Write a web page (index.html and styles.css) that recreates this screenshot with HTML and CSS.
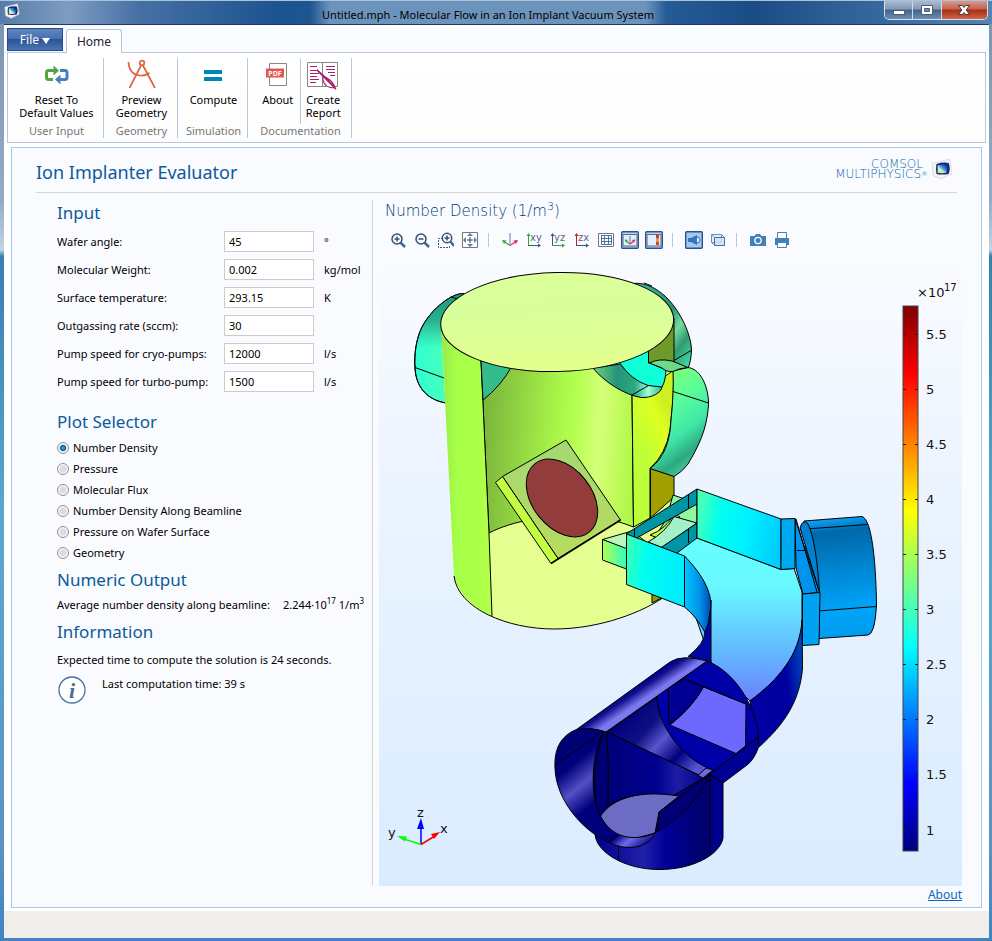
FILE: index.html
```html
<!DOCTYPE html>
<html lang="en">
<head>
<meta charset="utf-8">
<title>Untitled.mph - Molecular Flow in an Ion Implant Vacuum System</title>
<link rel="stylesheet" href="styles.css">
</head>
<body>
<svg width="0" height="0" class="sprite" aria-hidden="true">
  <defs>
    <linearGradient id="scr" x1="0" y1="1" x2="1" y2="0"><stop offset="0" stop-color="#ffe94a"/><stop offset=".35" stop-color="#c8f0c0"/><stop offset=".6" stop-color="#2f8be0"/><stop offset="1" stop-color="#06158c"/></linearGradient>
    <symbol id="app" viewBox="0 0 20 20"><path d="M1 5 17 1l2 13-10 5-7-3z" fill="#f3f3f3" stroke="#cfcfcf" stroke-width=".6"/><path d="M5 5.500q6-2 11-1 2 5 0 10-6 1-11 0Q4 10 5 5.500z" fill="#12267c"/><path d="M6 6.500q5-1 8-.5 1.500 3.500 0 7.500-4 .5-8 0z" fill="url(#scr)"/></symbol>
  </defs>
</svg>
<div class="window">
  <header class="titlebar">
    <svg class="app-icon" aria-hidden="true"><use href="#app"/></svg>
    <h1 class="caption"><span>Untitled.mph - Molecular Flow in an Ion Implant Vacuum System</span></h1>
    <div class="winbuttons">
      <button type="button" class="win-min" aria-label="Minimize"><svg viewBox="0 0 14 12"><rect x="1.500" y="6.500" width="11" height="4" fill="#fff" stroke="#4c5c74"/></svg></button>
      <button type="button" class="win-max" aria-label="Maximize"><svg viewBox="0 0 14 12"><path d="M1.500 1.500h11v9h-11z" fill="#fff" stroke="#4c5c74"/><path d="M4.500 4.500h5v3h-5z" fill="#6b8cb4" stroke="#4c5c74"/></svg></button>
      <button type="button" class="win-close" aria-label="Close"><svg viewBox="0 0 14 12"><path d="M1.500 1.500h4L7 3.500l1.500-2h4L9.200 6l3.300 4.500h-4L7 8.500l-1.500 2h-4L4.800 6z" fill="#fff" stroke="#4f3038"/></svg></button>
    </div>
  </header>

  <div class="client">
    <nav class="tabs">
      <button type="button" class="file">File <svg viewBox="0 0 8 7"><path d="M0 1h8L4 7z" fill="#fff"/></svg></button>
      <button type="button" class="tab">Home</button>
    </nav>
    <section class="ribbon">
      <div class="group g-reset">
        <div class="tools">
          <button type="button"><svg viewBox="0 0 32 32"><g fill="none" stroke-width="3"><path d="M13 21.500H8.500q-2 0-2-2v-5q0-2 2-2H14" stroke="#52a63a"/><path d="M20 12.500h5q2 0 2 2v5q0 2-2 2h-5" stroke="#4480bb"/></g><path d="M13.500 7.500 19 12.500l-5.500 5z" fill="#52a63a"/><path d="M20.500 16.500V26.500L15 21.500z" fill="#4480bb"/></svg><span>Reset To<br>Default Values</span></button>
        </div>
        <div class="gname">User Input</div>
      </div>
      <div class="group g-geom">
        <div class="tools">
          <button type="button"><svg viewBox="0 0 32 32"><g fill="none" stroke="#dd6544" stroke-width="1.700"><circle cx="17" cy="5" r="2.300"/><path d="M16 7.500 4.500 30M18 7.500 30 30M3.500 4c0 7 4 13 11.500 13.500 4 .5 7-.5 9.500-2.500"/></g></svg><span>Preview<br>Geometry</span></button>
        </div>
        <div class="gname">Geometry</div>
      </div>
      <div class="group g-sim">
        <div class="tools">
          <button type="button"><svg viewBox="0 0 32 32"><path d="M7 12h18v4H7zM7 19h18v4H7z" fill="#0086b3"/></svg><span>Compute</span></button>
        </div>
        <div class="gname">Simulation</div>
      </div>
      <div class="group g-doc">
        <div class="tools">
          <button type="button" class="b-about"><svg viewBox="0 0 32 32"><path d="M7.500 5.500h17v22h-17z" fill="#fff" stroke="#888"/><path d="M4 10.500h18v9H4z" fill="#e4574c"/><text x="13" y="17.500" text-anchor="middle" class="pdf">PDF</text></svg><span>About</span></button>
          <button type="button" class="b-report"><svg viewBox="0 0 32 32"><path d="M.5 4.500h30v24H.5zM15.500 4.500v24" fill="#fff" stroke="#888"/><path d="M3 8.500h7M3 12.500h8M3 15.500h9M3 18.500h7M3 21.500h9M3 24.500h6M19 8.500h9M19 11.500h9M21 14.500h7M23 17.500h5" stroke="#a8216e"/><path d="M10 12c5 4 12 10 18 18-7 0-11-2-12-8-1-3 1-4 4-2 5 3 7 6 8 10z" fill="#fff" stroke="#a8216e" stroke-width="1.200"/><path d="M10 12 29 31" stroke="#a8216e" stroke-width="1.200"/></svg><span>Create<br>Report</span></button>
        </div>
        <div class="gname">Documentation</div>
      </div>
    </section>

    <main class="panel">
      <div class="head">
        <h2>Ion Implanter Evaluator</h2>
        <div class="logo"><div class="logo-text"><div class="logo-top">COMSOL</div><div>MULTIPHYSICS<sup>®</sup></div></div><svg aria-hidden="true"><use href="#app"/></svg></div>
      </div>
      <div class="body">
        <form class="side">
          <h3>Input</h3>
          <div class="fields">
            <label for="f1">Wafer angle:</label><input id="f1" type="text" value="45"><span>°</span>
            <label for="f2">Molecular Weight:</label><input id="f2" type="text" value="0.002"><span>kg/mol</span>
            <label for="f3">Surface temperature:</label><input id="f3" type="text" value="293.15"><span>K</span>
            <label for="f4">Outgassing rate (sccm):</label><input id="f4" type="text" value="30"><span></span>
            <label for="f5">Pump speed for cryo-pumps:</label><input id="f5" type="text" value="12000"><span>l/s</span>
            <label for="f6">Pump speed for turbo-pump:</label><input id="f6" type="text" value="1500"><span>l/s</span>
          </div>
          <h3>Plot Selector</h3>
          <div class="radios">
            <label><input type="radio" name="plot" checked>Number Density</label>
            <label><input type="radio" name="plot">Pressure</label>
            <label><input type="radio" name="plot">Molecular Flux</label>
            <label><input type="radio" name="plot">Number Density Along Beamline</label>
            <label><input type="radio" name="plot">Pressure on Wafer Surface</label>
            <label><input type="radio" name="plot">Geometry</label>
          </div>
          <h3>Numeric Output</h3>
          <div class="result"><span>Average number density along beamline:</span><output>2.244·10<sup>17</sup> 1/m<sup>3</sup></output></div>
          <h3>Information</h3>
          <p class="expected">Expected time to compute the solution is 24 seconds.</p>
          <div class="last">
            <svg viewBox="0 0 28 28" aria-hidden="true"><circle cx="14" cy="14" r="13" fill="#fff" stroke="#44709f" stroke-width="1.300"/><text x="14" y="22" text-anchor="middle" class="i">i</text></svg>
            <span>Last computation time: 39 s</span>
          </div>
        </form>

        <section class="graph">
          <h3 class="plot-title">Number Density (1/m<sup>3</sup>)</h3>
          <div class="toolbar">
            <button type="button" aria-label="Zoom in"><svg viewBox="0 0 16 16"><circle cx="7" cy="7" r="5" class="z"/><path d="M10.500 10.500 15 15" class="zh"/><path d="M4.500 7h5M7 4.500v5" class="z"/></svg></button>
            <button type="button" aria-label="Zoom out"><svg viewBox="0 0 16 16"><circle cx="7" cy="7" r="5" class="z"/><path d="M10.500 10.500 15 15" class="zh"/><path d="M4.500 7h5" class="z"/></svg></button>
            <button type="button" aria-label="Zoom box"><svg viewBox="0 0 16 16"><path d="M5 6.500H.5v9h11V13" fill="none" stroke="#3f5878" stroke-dasharray="2 1"/><circle cx="9" cy="6" r="4.700" class="z"/><path d="M12.500 9.500 16 14" class="zh"/><path d="M6.500 6h5M9 3.500v5" class="z"/></svg></button>
            <button type="button" aria-label="Zoom extents"><svg viewBox="0 0 16 16"><path d="M.5.5h15v15H.5z" fill="#fff" stroke="#777"/><path d="M5 8h6M8 5v6" stroke="#345"/><path d="M8 1l3 3H5zM8 15l3-3H5zM1 8l3-3v6zM15 8l-3-3v6z" fill="#4a80b8"/></svg></button>
            <i></i>
            <button type="button" aria-label="Default view"><svg viewBox="0 0 16 16"><path d="M8 1v11" stroke="#4a80b8"/><path d="M8 13.500 1 9" stroke="#3cab2c" stroke-width="1.300"/><path d="m0 8 4.500.5-2.500 3.500z" fill="#3cab2c"/><path d="m8 13.500 7-4.500" stroke="#e0286c" stroke-width="1.300"/><path d="m16 8-4.500.5 2.500 3.500z" fill="#e0286c"/></svg></button>
            <button type="button" aria-label="XY view"><svg viewBox="0 0 16 16"><path d="M2.500 2v12" stroke="#35a535"/><path d="M.5 4 2.500 1l2 3z" fill="#35a535"/><path d="M2 13.500h12" stroke="#36587c"/><path d="m12 11.500 3 2-3 2z" fill="#36587c"/><text x="4" y="9" class="ax">xy</text></svg></button>
            <button type="button" aria-label="YZ view"><svg viewBox="0 0 16 16"><path d="M2.500 2v12" stroke="#36587c"/><path d="M.5 4 2.500 1l2 3z" fill="#36587c"/><path d="M2 13.500h12" stroke="#35a535"/><path d="m12 11.500 3 2-3 2z" fill="#35a535"/><text x="4" y="9" class="ax">yz</text></svg></button>
            <button type="button" aria-label="ZX view"><svg viewBox="0 0 16 16"><path d="M2.500 2v12" stroke="#c02020"/><path d="M.5 4 2.500 1l2 3z" fill="#c02020"/><path d="M2 13.500h12" stroke="#36587c"/><path d="m12 11.500 3 2-3 2z" fill="#36587c"/><text x="4" y="9" class="ax">zx</text></svg></button>
            <button type="button" aria-label="Grid"><svg viewBox="0 0 16 16"><path d="M.5 1.500h15v13H.5z" fill="#fff" stroke="#777"/><path d="M3 3.500h10.500v9H3.500v-9M3 6.500h10M3 9.500h10M6.500 3v9M10.500 3v9" fill="none" stroke="#4a70a0"/></svg></button>
            <button type="button" aria-label="Axis orientation"><svg viewBox="0 0 18 18" class="on"><rect x=".7" y=".7" width="16.600" height="16.600" rx="1" fill="#bcd6f4" stroke="#29508f" stroke-width="1.400"/><path d="M2 3.500h14v11.500H2z" fill="#e0eefe" stroke="#667"/><path d="M9 5v7" stroke="#4a80b8"/><path d="M9 13 5 10" stroke="#3cab2c" stroke-width="1.300"/><path d="m3.500 8.500 3.500.5-2 2.500z" fill="#3cab2c"/><path d="m9 13 4-3" stroke="#e0286c" stroke-width="1.300"/><path d="m14.500 8.500-3.500.5 2 2.500z" fill="#e0286c"/></svg></button>
            <button type="button" aria-label="Color legend"><svg viewBox="0 0 18 18" class="on"><rect x=".7" y=".7" width="16.600" height="16.600" rx="1" fill="#bcd6f4" stroke="#29508f" stroke-width="1.400"/><path d="M2 3.500h14v11.500H2z" fill="#e0eefe" stroke="#667"/><path d="M11 4h3v4h-3z" fill="#b83c58"/><path d="M11 7h3v4h-3z" fill="#e89440"/><path d="M11 11h3v3h-3z" fill="#d04428"/></svg></button>
            <i></i>
            <button type="button" aria-label="Scene light"><svg viewBox="0 0 18 18" class="on"><rect x=".7" y=".7" width="16.600" height="16.600" rx="1" fill="#a8c8f0" stroke="#29508f" stroke-width="1.400"/><path d="M3 7h3l6-3v10l-6-3H3z" fill="#3674b4"/><path d="M12 6q3 0 3 3t-3 3" fill="#dcebff" stroke="#3674b4"/></svg></button>
            <button type="button" aria-label="Transparency"><svg viewBox="0 0 16 16"><path d="M1.500 2.500h10v8h-10z" fill="#e3eefb" stroke="#6b94c4"/><path d="M4.500 5.500h10v8h-10z" fill="#cfe0f5" fill-opacity=".8" stroke="#3f6fa8"/><path d="m1.500 2.500 3 3M11.500 2.500l3 3M1.500 10.500l3 3" stroke="#6b94c4"/></svg></button>
            <i></i>
            <button type="button" aria-label="Image snapshot"><svg viewBox="0 0 16 16"><path d="M0 4h4.500L6 2h4l1.500 2H16v10H0z" fill="#4480b8"/><circle cx="8" cy="8.500" r="3.800" fill="#fff"/><circle cx="8" cy="8.500" r="2.500" fill="#4480b8"/></svg></button>
            <button type="button" aria-label="Print"><svg viewBox="0 0 16 16"><path d="M3.500.5h9v6h-9z" fill="#fff" stroke="#4480b8"/><path d="M1 6h14v7H1z" fill="#4480b8"/><path d="M3.500 10.500h9v5h-9z" fill="#fff" stroke="#4480b8"/></svg></button>
          </div>
          <svg class="scene" viewBox="379 260 583 626" role="img" aria-label="Number density in the vacuum system">
            <defs>
              <linearGradient id="bar" x1="0" x2="0" y1="0" y2="1"><stop offset="0" stop-color="#800000"/><stop offset=".125" stop-color="#f00"/><stop offset=".375" stop-color="#ff0"/><stop offset=".5" stop-color="#80ff80"/><stop offset=".625" stop-color="#0ff"/><stop offset=".875" stop-color="#00f"/><stop offset="1" stop-color="#000080"/></linearGradient>
              <linearGradient id="wall" gradientUnits="userSpaceOnUse" x1="483" x2="634" y1="450" y2="460"><stop offset="0" stop-color="#7cb63c"/><stop offset=".45" stop-color="#a6f248"/><stop offset=".6" stop-color="#b4ff50"/><stop offset=".76" stop-color="#d6ff78"/><stop offset="1" stop-color="#aef846"/></linearGradient>
              <linearGradient id="yel" gradientUnits="userSpaceOnUse" x1="632" x2="674" y1="440" y2="420"><stop offset="0" stop-color="#baff3a"/><stop offset=".7" stop-color="#deff20"/><stop offset="1" stop-color="#ccf020"/></linearGradient>
              <linearGradient id="top" x1="0" x2="0" y1="0" y2="1"><stop offset="0" stop-color="#dcff98"/><stop offset=".35" stop-color="#d8ff9c"/><stop offset="1" stop-color="#e4ff8c"/></linearGradient>
              <linearGradient id="strip" x1="0" x2="1"><stop offset="0" stop-color="#98e848"/><stop offset=".3" stop-color="#a6ff48"/><stop offset="1" stop-color="#b2ff48"/></linearGradient>
              <linearGradient id="pl" x1="0" x2="1" y1=".3" y2=".2"><stop offset="0" stop-color="#30ffd4"/><stop offset=".5" stop-color="#48ffb8"/><stop offset="1" stop-color="#58f890"/></linearGradient>
              <linearGradient id="pls" x1="0" x2="0" y1="0" y2="1"><stop offset="0" stop-color="#209880"/><stop offset=".25" stop-color="#209078" stop-opacity=".7"/><stop offset=".5" stop-color="#20b090" stop-opacity="0"/></linearGradient>
              <linearGradient id="pr" x1="0" x2="1" y1="0" y2="1"><stop offset="0" stop-color="#40b898"/><stop offset=".5" stop-color="#269878"/><stop offset=".65" stop-color="#78dca0"/><stop offset=".78" stop-color="#309c70"/><stop offset="1" stop-color="#40e8ac"/></linearGradient>
              <linearGradient id="pb" x1=".3" x2=".7" y1="0" y2="1"><stop offset="0" stop-color="#84ff6c"/><stop offset=".3" stop-color="#5cff98"/><stop offset=".6" stop-color="#40e8a8"/><stop offset=".8" stop-color="#2ca880"/><stop offset="1" stop-color="#60d8a8"/></linearGradient>
              <linearGradient id="band" x1="0" x2="1"><stop offset="0" stop-color="#74d080"/><stop offset=".35" stop-color="#249478"/><stop offset=".6" stop-color="#2ca880"/><stop offset=".8" stop-color="#9cffd8"/><stop offset="1" stop-color="#30b898"/></linearGradient>
              <linearGradient id="front" x1="0" x2="1" y1=".4" y2=".6"><stop offset="0" stop-color="#38ffb8"/><stop offset=".3" stop-color="#00fff0"/><stop offset="1" stop-color="#00ecff"/></linearGradient>
              <linearGradient id="back" x1="0" x2="1" y1=".4" y2=".6"><stop offset="0" stop-color="#48ffb8"/><stop offset=".25" stop-color="#00fff0"/><stop offset=".6" stop-color="#00f0ff"/><stop offset="1" stop-color="#00ccff"/></linearGradient>
              <linearGradient id="duct" x1="0" x2="0" y1="0" y2="1"><stop offset="0" stop-color="#64ffff"/><stop offset=".3" stop-color="#68f8ff"/><stop offset=".7" stop-color="#64b8ff"/><stop offset="1" stop-color="#6c80ff"/></linearGradient>
              <linearGradient id="bend" x1="0" x2="1"><stop offset="0" stop-color="#00c4ff"/><stop offset=".6" stop-color="#0090e8"/><stop offset="1" stop-color="#0048b0"/></linearGradient>
              <linearGradient id="cyl" x1="0" x2=".07" y1="0" y2="1"><stop offset="0" stop-color="#28b0ff"/><stop offset=".1" stop-color="#0088d8"/><stop offset=".15" stop-color="#0068a8"/><stop offset=".45" stop-color="#0084d0"/><stop offset=".8" stop-color="#00a4f8"/><stop offset="1" stop-color="#009cf0"/></linearGradient>
              <linearGradient id="outer" x1="0" x2="1" y1=".7" y2=".4"><stop offset="0" stop-color="#0000a4"/><stop offset=".7" stop-color="#0000a0"/><stop offset="1" stop-color="#0040b4"/></linearGradient>
              <linearGradient id="ridge" gradientUnits="userSpaceOnUse" x1="622" y1="696" x2="643" y2="727"><stop offset="0" stop-color="#000090"/><stop offset=".12" stop-color="#10108c"/><stop offset=".4" stop-color="#7c78f0"/><stop offset=".5" stop-color="#7c78f0"/><stop offset=".8" stop-color="#4440b8"/><stop offset="1" stop-color="#3c38b0"/></linearGradient>
              <linearGradient id="ring" gradientUnits="userSpaceOnUse" x1="560" y1="740" x2="645" y2="845"><stop offset="0" stop-color="#000070"/><stop offset=".2" stop-color="#00007c"/><stop offset=".36" stop-color="#5450c4"/><stop offset=".52" stop-color="#00007c"/><stop offset=".82" stop-color="#00007c"/><stop offset=".9" stop-color="#706ce8"/><stop offset="1" stop-color="#101090"/></linearGradient>
              <linearGradient id="inner" gradientUnits="userSpaceOnUse" x1="625" y1="715" x2="690" y2="775"><stop offset="0" stop-color="#00007c"/><stop offset=".3" stop-color="#101084"/><stop offset=".5" stop-color="#5854cc"/><stop offset=".75" stop-color="#000080"/><stop offset="1" stop-color="#5854d0"/></linearGradient>
              <linearGradient id="iw" x1="0" x2="1"><stop offset="0" stop-color="#000078"/><stop offset=".5" stop-color="#000090"/><stop offset=".72" stop-color="#1c1ca4"/><stop offset="1" stop-color="#000088"/></linearGradient>
              <linearGradient id="base" x1="0" x2="1"><stop offset="0" stop-color="#000090"/><stop offset=".38" stop-color="#2020a8"/><stop offset=".55" stop-color="#000098"/><stop offset=".85" stop-color="#00006c"/><stop offset="1" stop-color="#00009c"/></linearGradient>
              <linearGradient id="blk" x1="0" x2="1"><stop offset="0" stop-color="#b0ff50"/><stop offset="1" stop-color="#30ffc0"/></linearGradient>
              <linearGradient id="waf" x1="0" x2="0" y1="0" y2="1"><stop offset="0" stop-color="#a4d874"/><stop offset="1" stop-color="#b8dc5c"/></linearGradient>
            </defs>
            <g stroke="#000" stroke-width="1" stroke-linejoin="round" fill="none">
              <!-- pump ports behind the chamber -->
              <path d="M464 293.500C452 293 432 308 422 327C416 339 414 355 415 368C416 388 428 400 446 403L470 403V300z" fill="url(#pl)"/>
              <path d="M464 293.500C452 293 432 308 422 327C416 339 414 355 415 368C416 388 428 400 446 403L470 403V300z" fill="url(#pls)"/>
              <path d="M415 367.500 444 378M450 297l9 2"/>
              <path d="M630 284C644 281 657 288 668 299C681 313 691 334 691.500 350Q691 362 688 368L660 362z" fill="url(#pr)"/>
              <path d="M673 361l19-11M644 283l8 3"/>
              <!-- chamber -->
              <path d="M454 576C458 609 508 629 554 629C600 629 644 612 667 595L674 480V322H441z" fill="#e4ff90" stroke="none"/>
              <path d="M481 361V300H650V395H632L633.500 527C618 521 606 518 590 517C548 514 512 521 489 533L486 470z" fill="url(#wall)"/>
              <path d="M632 390H645L674 370Q674 400 670 430Q666 454 650 468.500V518L633.500 527z" fill="url(#yel)"/>
              <path d="M650.500 468.500 674 476V497L650.500 518z" fill="#a2a000"/>
              <path d="M441 323 444 378 454 576C458 592 472 607 492 616L489 533 481 361 460 340z" fill="url(#strip)" stroke="none"/>
              <path d="M481 361 489 533 492 616"/>
              <path d="M454 576C458 609 508 629 554 629C600 629 644 612 667 595"/>
              <path d="M481 361 512 366Q501 386 483 400z" fill="#34bc8c"/>
              <path d="M593 368C604 382 625 395 641 397.500C652 398 661 393 662 387L648 360z" fill="url(#band)"/>
              <path d="M619 362Q631 380 648 385.500L662 387C665 382 665.500 376 666 370L650 363 648.500 345z" fill="#10ffd8"/>
              <path d="M632 395 648.500 385.500"/>
              <path d="M648.500 350.500 674 318V362L648.500 363z" fill="#70992c"/>
              <path d="M652 589V603L667 595z" fill="#86a010"/>
              <ellipse cx="557.200" cy="322" rx="116.500" ry="49.500" transform="rotate(-1.300 557 322)" fill="url(#top)"/>
              <path d="M673 371 688 367.500C702 369 709 390 708.500 405C707 430 698 447 688 464Q682 472 674 476.500L650 468.500C664 458 670 442 671 420Q674 392 673 371z" fill="url(#pb)"/>
              <path d="M649.500 363Q659 358 672 361L688 367.500Q679 368 673 371.500 666 372 662 368z" fill="#6cda88"/>
              <path d="M673 391.500 708.500 403"/>
              <!-- wafer -->
              <path d="M566 440 620.500 520 558 558.500 502.500 476.500z" fill="url(#waf)"/>
              <path d="M502.500 476.500 558 558.500 551 563.500 495.500 482.500z" fill="#c2ff40"/>
              <path d="M551 563.500 620.500 520" stroke-width="1.500"/>
              <ellipse cx="562" cy="498" rx="43.600" ry="29.600" transform="rotate(51.500 562 498)" fill="#923c3c"/>
              <!-- beamline slot -->
              <path d="M602.500 539.500 632 531 650 545 626 549z" fill="#b8f8b8"/>
              <path d="M602.500 539.500 626.500 548.500V569L602.500 560z" fill="url(#blk)"/>
              <path d="M673 495 682 498 697 504V523L652 541 666 520z" fill="#90f8a0"/>
              <path d="M650 535Q666 529 674 514L680 517 660 539z" fill="#c4f840"/>
              <path d="M674 516.500 697 523 662 547.500 648 542Q666 532 674 516.500z" fill="#a4f0c8"/>
              <path d="M626 534 697 489V504L635 539z" fill="#0095a5"/>
              <path d="M659 549 697 523V540L677 556z" fill="#0095a5"/>
              <path d="M634.500 529v9M688.500 494v14M688.500 529v14"/>
              <!-- turbo pump and right blocks -->
              <path d="M804 521 862 516.500C873 520 876 570 876.500 605Q875 634 868 635L812 639z" fill="url(#cyl)"/>
              <path d="M806 529 867 524.500M818 611 876.500 606.500"/>
              <path d="M800 528Q803 518 808 524C815 538 818 570 819.500 592z" fill="#0080d0"/>
              <path d="M795 518.500 819.500 592.500 803 594 796 568z" fill="#0094ee"/>
              <path d="M797 550.500h8M796 519 817 592"/>
              <path d="M802.500 594 820 592.500 819 644.500 802.500 645.500z" fill="#00a2f4"/>
              <!-- duct -->
              <path d="M677 553 697 538 781 569.500 794 568.500 802 592V625C800 655 778 680 750 701L711 662 690 600z" fill="url(#duct)"/>
              <path d="M697 489 781 519V569.500L697 538z" fill="url(#back)"/>
              <path d="M781 519 795 518.500V568.500L781 569.500z" fill="#00aaf2"/>
              <path d="M802 620C800 655 778 680 750 701L758.500 747.500C785 724 800 700 802.500 668z" fill="url(#outer)"/>
              <path d="M688 656.500Q705 643 705 632L711 600V662z" fill="#0008a4"/>
              <path d="M684.500 556C704 576 714 596 710 612Q709 624 705 632.500 696 616 684.500 607z" fill="url(#bend)"/>
              <path d="M626.500 534 684.500 556V607L626.500 584.500z" fill="url(#front)"/>
              <!-- lower manifold -->
              <path d="M604 731 590 750 590 800 612 834 655 815 705 778 607 732z" fill="#000076" stroke="none"/>
              <path d="M607 732 707 661C740 674 758 715 758.500 738L711 774 655 815z" fill="#0000a8"/>
              <path d="M607 732 657 697C658 730 688 762 713 770L705 778z" fill="url(#inner)"/>
              <path d="M670 725Q692 708 703.500 687L746 704 745.500 746 736 753.500z" fill="#6d69ff"/>
              <path d="M668.500 688V725Q692 708 703.500 687L684 678.500z" fill="#000094"/>
              <path d="M684 678.500 746 704"/>
              <path d="M607 732Q609 770 608 806 628 790 679 796L705 778z" fill="url(#iw)"/>
              <path d="M698 775.500 706 768 713 770 703 778z" fill="#6d69e0"/>
              <path d="M758.500 737V747Q754 760 747 765L723 783 710 774z" fill="#000094"/>
              <path d="M710 774.500 723 783V838C720 855 692 870 658 869.500C624 869 596 852 595 834L630 820z" fill="url(#base)"/>
              <path d="M604 731C596 752 590 792 600 817L608 806Q609 770 607 732z" fill="#000074"/>
              <path d="M600 817C612 797 642 790 679 796L659 812 655 833 630 840 612 834z" fill="#6c6cc4"/>
              <path d="M710 774.500 659 812Q660 823 655 833 693 812 710 774.500z" fill="#000074"/>
              <path d="M710 774v80M618.500 846v15"/>
              <path d="M576.500 729.500 670 662Q682 654 707 661L606 732Q590 727 576.500 729.500z" fill="url(#ridge)"/>
              <path d="M604 731.500Q590 727 576.500 729.500C560 736 554 750 555 768C556 800 582 830 608 842C630 853 650 846 655 833C646 837 640 837.500 632 837.500C600 836 590 800 594 765Q596 745 604 731.500z" fill="url(#ring)"/>
              <path d="M555 765 602 732M608 842 617 835"/>
            </g>
            <rect x="903" y="306" width="15" height="545" fill="url(#bar)" stroke="#444"/>
            <path stroke="#222" d="M903 334.500h3m9 0h3M903 389.500h3m9 0h3M903 444.500h3m9 0h3M903 499.500h3m9 0h3M903 554.500h3m9 0h3M903 609.500h3m9 0h3M903 664.500h3m9 0h3M903 719.500h3m9 0h3M903 774.500h3m9 0h3M903 830.500h3m9 0h3"/>
            <g class="scale">
              <text x="917" y="297">×10</text><text x="944" y="291" class="exp">17</text>
              <text x="926" y="339">5.5</text><text x="926" y="394">5</text><text x="926" y="449">4.5</text><text x="926" y="504">4</text><text x="926" y="559">3.5</text><text x="926" y="614">3</text><text x="926" y="669">2.5</text><text x="926" y="724">2</text><text x="926" y="779">1.5</text><text x="926" y="835">1</text>
              <text x="417" y="817">z</text><text x="388" y="837">y</text><text x="440" y="833">x</text>
            </g>
            <g stroke-width="1.500"><path d="M421 844.500V826" stroke="#00f"/><path d="M421 844.500 404 839" stroke="#0f0"/><path d="m421 844.500 13-8" stroke="red"/></g>
            <path d="M417 829l4-11 3 11z" fill="#00f"/><path d="m397 836 10 .5-2 5z" fill="#0f0"/><path d="m440 832-9 2 3 5z" fill="red"/>
          </svg>
          <a href="#about" class="about">About</a>
        </section>
      </div>
    </main>
    <footer class="status"></footer>
  </div>
</div>
</body>
</html>
```
FILE: styles.css
```css
* { box-sizing: border-box; }
body { margin: 0; font: 11px/16px "Noto Sans", "Open Sans", sans-serif; color: #000; }
button, input { font: inherit; color: inherit; margin: 0; }
button { border: 0; background: none; padding: 0; }
h1, h2, h3, p { margin: 0; font-weight: 400; }
h2, h3 { color: #0a5a9c; }
.sprite { position: absolute; }

.window {
  min-height: 100vh;
  display: flex;
  flex-direction: column;
  padding: 0 3px 3px 4px;
  background: linear-gradient(180deg, #7893b4, #93abc6 200px, #c3d4e2 250px, #3780b0 256px, #58a8d0 55%, #5b94c0 90%, #3c84c4);
}
.titlebar {
  display: flex;
  align-items: flex-start;
  height: 24px;
  margin: 0 -3px 0 -4px;
  padding: 0 4px;
  border-top: 1px solid #a9c3d8;
  background: linear-gradient(90deg, #587ca8, #7d9cc2 7%, #4670a4 14%, #1c5490 28%, #265e98 66%, #1a4c86 76%, #3a6ba0 90%, #5684b0);
}
.app-icon { width: 16px; height: 16px; margin-top: 2px; }
.caption { flex: 1; margin-left: 72px; text-align: center; line-height: 28px; font-size: 11px; }
.caption span { display: inline-block; height: 23px; padding: 0 12px; background: linear-gradient(90deg, #6c93bc00, #6c93bc 20px calc(100% - 20px), #6c93bc00); }
.winbuttons { display: flex; width: 104px; border: 1px solid #d4e0ec; border-top: 0; border-radius: 0 0 5px 5px; overflow: hidden; }
.winbuttons button { height: 18px; flex: 29; border-right: 1px solid #cfdbe8; background: linear-gradient(#a9bbd0, #8298b4 45%, #43628a 50%, #6c8eb4); }
.winbuttons .win-close { flex: 48; border: 0; background: linear-gradient(#d79a8c, #c4604c 45%, #a82c14 50%, #cc6848); }
.winbuttons svg { width: 14px; height: 12px; display: block; margin: 0 auto; }

.client { flex: 1; display: flex; flex-direction: column; background: #fff; border-top: 1px solid #223a5c; }
.tabs { display: flex; align-items: flex-end; height: 27px; padding: 3px 3px 0; background: #fafbff; font-size: 12px; }
.file { width: 56px; height: 23px; margin-bottom: 1px; color: #fff; border: 1px solid #244a88; background: linear-gradient(#5f86c0, #4a70b0 45%, #2c5498 50%, #4a74b4); }
.file svg { width: 8px; height: 7px; }
.tab { width: 56px; height: 24px; margin: 0 0 -1px 3px; border: 1px solid #b6c8dd; border-bottom: 0; border-radius: 3px 3px 0 0; background: #fff; position: relative; color: #223; }
.ribbon { display: flex; height: 91px; margin: 0 3px; padding: 5px 0 4px; border: 1px solid #b6c8dd; background: linear-gradient(#fff, #fdfdfe); }
.group { display: flex; flex-direction: column; justify-content: space-between; padding-left: 2px; border-right: 1px solid #b6c8dd; }
.g-reset { width: 96px; }
.g-geom { width: 74px; }
.g-sim { width: 70px; }
.g-doc { width: 104px; }
.tools { flex: 1; display: flex; justify-content: center; }
.tools button { display: flex; flex-direction: column; align-items: center; line-height: 13px; }
.tools svg { width: 32px; height: 32px; margin-bottom: 3px; }
.g-doc .b-about { width: 52px; padding-left: 5px; border-right: 1px solid #b6c8dd; }
.g-doc .b-report { width: 50px; padding-right: 6px; }
.gname { text-align: center; color: #777; line-height: 14px; }
.pdf { font: bold 7px "Open Sans", sans-serif; fill: #fff; }

.panel { flex: 1; display: flex; flex-direction: column; margin: 4px 7px 3px; padding: 0 19px 2px 24px; border: 1px solid #9fcdf0; background: #fafbff; }
.head { display: flex; justify-content: space-between; height: 45px; margin-right: 5px; padding: 8px 4px 0 0; border-bottom: 1px solid #d3d5d9; }
h2 { font-size: 18px; line-height: 32px; }
h3 { font-size: 17px; line-height: 26px; }
.logo { display: flex; gap: 3px; align-items: flex-start; padding-top: 2px; }
.logo svg { width: 22px; height: 22px; }
.logo-text { font: 200 12px/10px "DejaVu Sans", sans-serif; color: #1468ac; text-align: right; padding-top: 1px; }
.logo-top { padding-right: 5px; }
.logo-text sup { font-size: 7px; line-height: 0; vertical-align: 2px; }
.body { flex: 1; display: flex; padding-top: 7px; }
.side { width: 337px; flex: none; margin-bottom: 20px; padding: 0 8px 0 21px; border-right: 1px solid #cdd0d5; }
.fields { display: grid; grid-template-columns: 167px 90px auto; row-gap: 7px; align-items: center; margin: 5px 0 17px; }
.fields input { width: 90px; height: 21px; padding: 0 4px; border: 1px solid #ccc; background: #fff; }
.fields span { padding-left: 10px; }
.radios { display: grid; row-gap: 5px; margin: 5px 0 6px; }
.radios label { display: flex; align-items: center; gap: 4px; line-height: 16px; }
.radios input { appearance: none; width: 12px; height: 12px; border: 1px solid #8e9298; border-radius: 50%; background: radial-gradient(circle, #dcdcdc 40%, #f6f6f6 60%); }
.radios input:checked { background: radial-gradient(circle, #35b4dc, #14608c 38%, #f2f2f2 52%); }
.result { display: flex; justify-content: space-between; margin: 4px 0 6px; white-space: nowrap; }
.result sup { font-size: 8px; line-height: 0; vertical-align: 5px; }
.expected { margin: 7px 0 8px; }
.last { display: flex; gap: 16px; padding-left: 1px; }
.last svg { width: 28px; height: 28px; }
.i { font: italic bold 22px "Liberation Serif", serif; fill: #44709f; }

.graph { flex: 1; min-width: 0; padding-left: 6px; display: flex; flex-direction: column; }
.plot-title { font: 200 15px/22px "DejaVu Sans", sans-serif; color: #003c78; padding-left: 6px; }
.plot-title sup { font-size: 11px; line-height: 0; vertical-align: 6px; }
.toolbar { display: flex; align-items: center; height: 24px; margin: 6px 0 8px 7px; }
.toolbar button { width: 24px; height: 24px; display: flex; align-items: center; justify-content: center; }
.toolbar svg { width: 16px; height: 16px; }
.toolbar .on { width: 18px; height: 18px; }
.toolbar i { width: 16px; height: 14px; }
.toolbar i::before { content: ""; display: block; width: 1px; height: 14px; margin-left: 6px; background: #c4c6ca; }
.z { fill: none; stroke: #34506f; stroke-width: 1.5px; }
.zh { stroke: #3c6c9c; stroke-width: 2.5px; }
.ax { font: 10px "DejaVu Sans", sans-serif; fill: #5a6a80; }
.scene { display: block; width: 100%; background: linear-gradient(#fafbff, #ecf4ff 35%, #daecff); }
.scale { font: 13px "DejaVu Sans", sans-serif; fill: #111; }
.exp { font-size: 10px; }
.about { align-self: flex-end; color: #0a66c2; font-size: 12px; line-height: 18px; }
.status { height: 27px; background: #f0edeb; }
```
